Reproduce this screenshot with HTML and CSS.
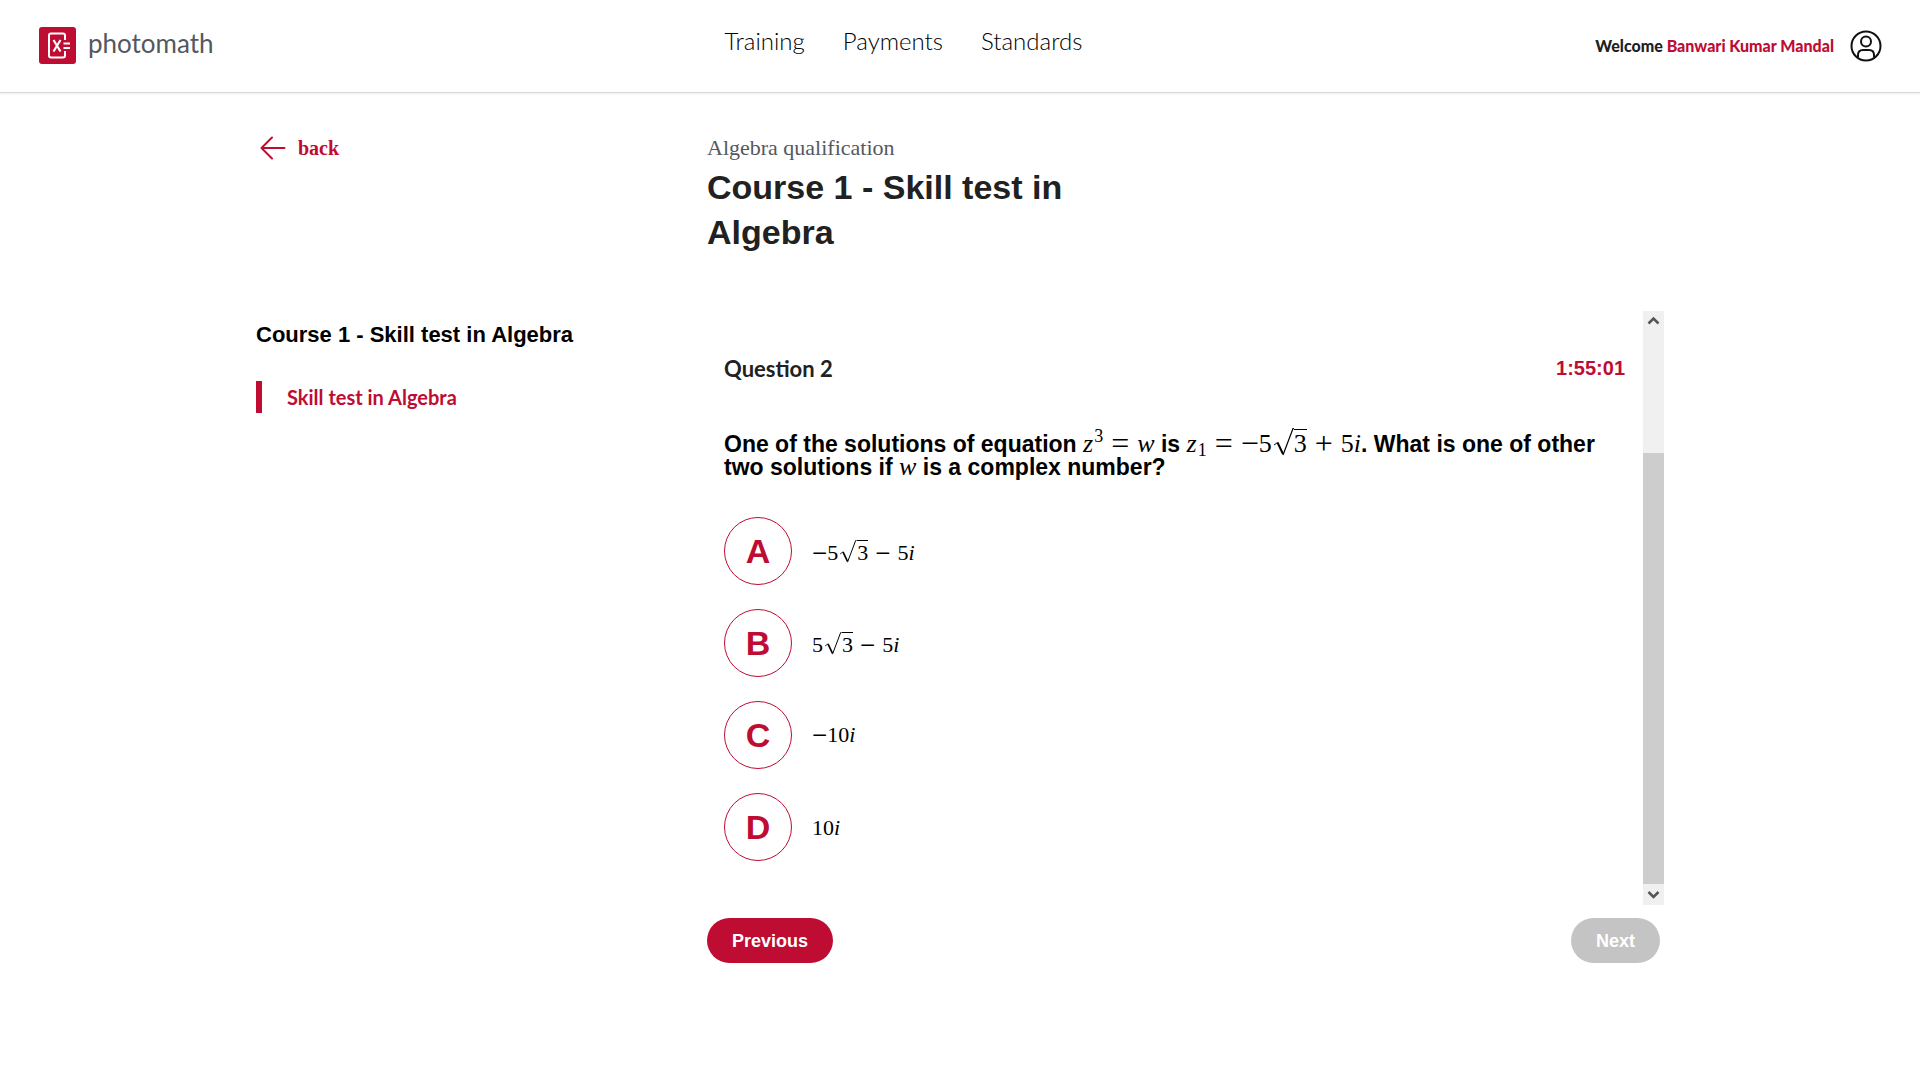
FILE: index.html
```html
<!DOCTYPE html>
<html lang="en">
<head>
<meta charset="utf-8">
<meta name="viewport" content="width=device-width, initial-scale=1">
<title>Photomath - Skill test in Algebra</title>
<link rel="stylesheet" href="styles.css">
</head>
<body>
<header class="topbar">
  <a class="brand" href="#">
    <svg class="brand-mark" viewBox="0 0 37 37" aria-hidden="true">
      <rect width="37" height="37" rx="3" fill="#be0c33"/>
      <path d="M26 13V8.500Q26 6.500 24 6.500H12Q10 6.500 10 8.500V28.500Q10 30.500 12 30.500H24Q26 30.500 26 28.500V24" fill="none" stroke="#fff" stroke-width="2"/>
      <path d="M14.500 13L21.500 24.500M21.500 13L14.500 24.500" stroke="#fff" stroke-width="2.200"/>
      <path d="M24.500 16.500H31M24.500 21H31" stroke="#fff" stroke-width="1.800"/>
    </svg>
    <span class="brand-name">photomath</span>
  </a>
  <nav class="menu">
    <a href="#">Training</a>
    <a href="#">Payments</a>
    <a href="#">Standards</a>
  </nav>
  <div class="account">
    <span>Welcome <a class="user" href="#">Banwari Kumar Mandal</a></span>
    <svg class="avatar" viewBox="0 0 32 32" fill="none" stroke="#111" stroke-width="2" aria-hidden="true">
      <circle cx="16" cy="16" r="14.500"/>
      <circle cx="16" cy="11.500" r="5"/>
      <path d="M8 27.500V25Q8 20 13 20H19Q24 20 24 25V27.500"/>
    </svg>
  </div>
</header>

<main class="page">
  <div class="intro">
    <a class="back" href="#">
      <svg class="arrow" viewBox="0 0 26 24" fill="none" stroke="#be0c33" stroke-width="2" stroke-linecap="round" stroke-linejoin="round" aria-hidden="true"><path d="M12 1.500L1.500 12L12 22.500M1.500 12H24.500"/></svg>
      back
    </a>
    <div class="titles">
      <p class="subject">Algebra qualification</p>
      <h1>Course 1 - Skill test in Algebra</h1>
    </div>
  </div>

  <div class="content">
    <aside class="sidebar">
      <h2>Course 1 - Skill test in Algebra</h2>
      <a class="lesson" href="#">Skill test in Algebra</a>
    </aside>

    <section class="test">
      <div class="panel">
        <div class="question">
          <div class="question-head">
            <h3>Question 2</h3>
            <span class="timer">1:55:01</span>
          </div>
          <p class="prompt">One of the solutions of equation <span class="math"><i>z</i><sup>3</sup><span class="rel">=</span><i>w</i></span> is <span class="math"><i>z</i><sub>1</sub><span class="rel">=</span><span class="op">−</span>5<span class="root"><svg class="radical" viewBox="0 0 22 28" fill="none" stroke="#000" aria-hidden="true"><path d="M2 17L5.500 14.500" stroke-width="1"/><path d="M5.500 14.500L11 26" stroke-width="2"/><path d="M11 27L21 0.500H22" stroke-width="1.200"/></svg><span class="radicand">3</span></span><span class="op bin">+</span>5<i>i</i></span>. What is one of other two solutions if <span class="math"><i>w</i></span> is a complex number?</p>
          <ul class="answers">
            <li><button class="choice" type="button">A</button><span class="math"><span class="op">−</span>5<span class="root"><svg class="radical" viewBox="0 0 22 28" fill="none" stroke="#000" aria-hidden="true"><path d="M2 17L5.500 14.500" stroke-width="1"/><path d="M5.500 14.500L11 26" stroke-width="2"/><path d="M11 27L21 0.500H22" stroke-width="1.200"/></svg><span class="radicand">3</span></span><span class="op bin">−</span>5<i>i</i></span></li>
            <li><button class="choice" type="button">B</button><span class="math">5<span class="root"><svg class="radical" viewBox="0 0 22 28" fill="none" stroke="#000" aria-hidden="true"><path d="M2 17L5.500 14.500" stroke-width="1"/><path d="M5.500 14.500L11 26" stroke-width="2"/><path d="M11 27L21 0.500H22" stroke-width="1.200"/></svg><span class="radicand">3</span></span><span class="op bin">−</span>5<i>i</i></span></li>
            <li><button class="choice" type="button">C</button><span class="math"><span class="op">−</span>10<i>i</i></span></li>
            <li><button class="choice" type="button">D</button><span class="math">10<i>i</i></span></li>
          </ul>
        </div>
        <div class="scroll" aria-hidden="true">
          <svg class="scroll-arrow" viewBox="0 0 21 21"><path d="M5.500 12.500L10.500 7.500L15.500 12.500" fill="none" stroke="#555" stroke-width="2.500"/></svg>
          <div class="track"><div class="thumb"></div></div>
          <svg class="scroll-arrow" viewBox="0 0 21 21"><path d="M5.500 8L10.500 13L15.500 8" fill="none" stroke="#555" stroke-width="2.500"/></svg>
        </div>
      </div>
      <div class="actions">
        <button class="pill" type="button">Previous</button>
        <button class="pill" type="button" disabled>Next</button>
      </div>
    </section>
  </div>
</main>
</body>
</html>
```
FILE: styles.css
```css
* { box-sizing: border-box; }

body {
  margin: 0;
  background: #fff;
  color: #212121;
  font-family: "Liberation Sans", Arial, sans-serif;
}

h1, h2, h3, p, ul { margin: 0; padding: 0; }
a { color: inherit; text-decoration: none; }

.topbar {
  display: grid;
  grid-template-columns: 1fr auto 1fr;
  align-items: center;
  height: 93px;
  padding: 0 38px 1px 39px;
  border-bottom: 1px solid #d8d8d8;
  box-shadow: 0 1px 2px #ececec;
  font-family: Lato, sans-serif;
}

.brand { display: flex; align-items: center; gap: 12px; }
.brand-mark { width: 37px; height: 37px; }
.brand-name { color: #54585e; font-size: 26px; line-height: 32px; padding-bottom: 5px; }

.menu {
  display: flex;
  gap: 38px;
  padding-bottom: 9px;
  margin-right: 114px;
  color: #000;
  font-size: 24px;
  font-weight: 300;
  line-height: 28px;
}

.account {
  display: flex;
  align-items: center;
  justify-content: flex-end;
  gap: 16px;
  font-size: 16px;
  font-weight: 900;
  white-space: nowrap;
}
.user { color: #be0c33; }
.avatar { width: 32px; height: 32px; }

.page { max-width: 1408px; margin: 0 auto; padding-top: 40px; }

.intro, .content { display: grid; grid-template-columns: 451px 1fr; }

.back {
  display: flex;
  align-items: center;
  align-self: start;
  gap: 12px;
  padding-left: 4px;
  color: #be0c33;
  font: bold 20px/30px "Liberation Serif", serif;
}
.arrow { width: 26px; height: 24px; }

.titles { max-width: 400px; }
.subject { color: #54585e; font: 22px/30px "Liberation Serif", serif; }
h1 { font-size: 34px; line-height: 45px; padding-top: 2px; }

.content { padding-top: 56px; }

h2 { padding-top: 10px; color: #000; font-size: 22px; line-height: 28px; }

.lesson {
  display: block;
  margin-top: 32px;
  padding-left: 25px;
  border-left: 6px solid #be0c33;
  color: #be0c33;
  font: bold 20px/32px Lato, sans-serif;
}

.panel { display: flex; }
.question { flex: 1; padding: 43px 18px 44px 17px; }
.question-head { display: flex; justify-content: space-between; align-items: center; }
h3 { font: bold 22px/30px Lato, sans-serif; }
.timer { padding-bottom: 2px; color: #be0c33; font-size: 20px; font-weight: bold; }

.prompt {
  margin-top: 44px;
  color: #000;
  font-size: 23px;
  font-weight: bold;
  line-height: 23px;
}

.math {
  color: #000;
  font-family: "Liberation Serif", serif;
  font-size: 26px;
  font-weight: normal;
  line-height: 1px;
  white-space: nowrap;
}
.math sup, .math sub { font-size: 18px; line-height: 1px; padding-left: 1px; }
.math sub { vertical-align: -4px; }
.math sup { vertical-align: 10px; }
.rel { font-size: 32px; padding: 0 8px; vertical-align: -2px; }
.op { font-size: 32px; vertical-align: -2px; }
.bin { padding: 0 8px; }
.radical { width: 22px; height: 28px; vertical-align: -4px; }
.radicand { display: inline-block; height: 25px; border-top: 1px solid #000; line-height: 28px; }

.answers { display: grid; gap: 24px; margin-top: 38px; list-style: none; }
.answers li { display: flex; align-items: center; gap: 20px; }
.choice {
  width: 68px;
  height: 68px;
  padding: 0;
  border: 1px solid #be0c33;
  border-radius: 50%;
  background: #fff;
  color: #be0c33;
  font: bold 34px/40px "Liberation Sans", Arial, sans-serif;
}
.answers .math { font-size: 22px; }
.answers .op { font-size: 27px; }
.answers .bin { padding: 0 7px; }
.answers .radical { width: 19px; height: 23px; vertical-align: -3px; }
.answers .radicand { height: 20px; line-height: 24px; }

.scroll { display: flex; flex-direction: column; width: 21px; background: #f0f0f0; }
.scroll-arrow { width: 21px; height: 21px; }
.track { display: flex; flex: 1; flex-direction: column; justify-content: flex-end; }
.thumb { height: 78%; background: #cdcdcd; }

.actions { display: flex; justify-content: space-between; padding: 13px 4px 40px 0; }
.pill {
  height: 45px;
  padding: 0 25px;
  border: 0;
  border-radius: 23px;
  background: #be0c33;
  color: #fff;
  font: bold 18px/24px "Liberation Sans", Arial, sans-serif;
}
.pill:disabled { background: #c4c4c4; }
```
